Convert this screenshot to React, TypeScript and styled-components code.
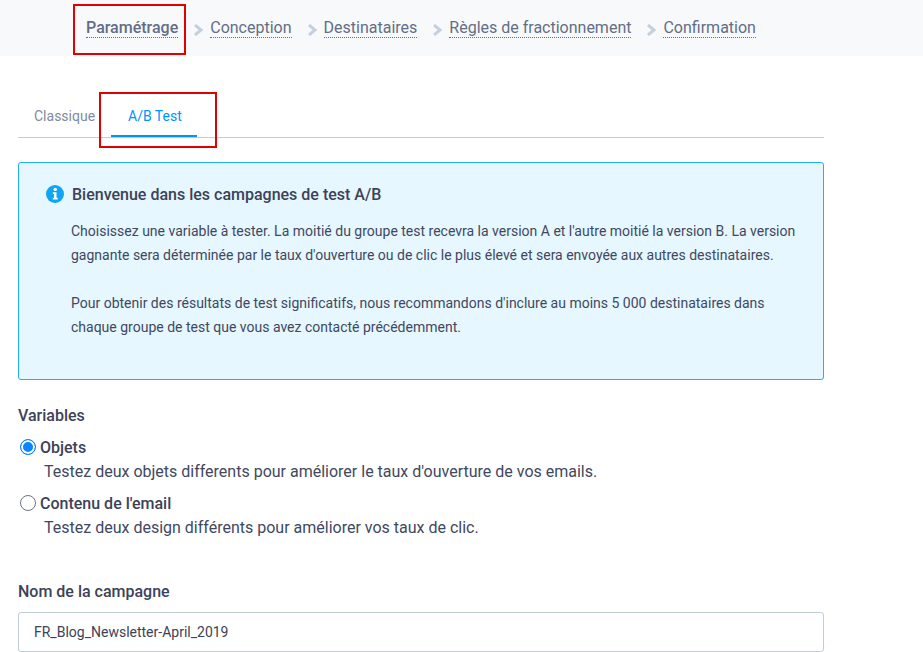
import React from "react";
import styled, { createGlobalStyle } from "styled-components";

const Global = createGlobalStyle`
  html, body { margin: 0; padding: 0; background: #fff; }
  body { font-family: Roboto, "Liberation Sans", sans-serif; color: #3c4257; overflow: hidden; }
  * { box-sizing: border-box; }
`;

const Page = styled.div`
  position: relative;
  width: 923px;
  height: 652px;
  overflow: hidden;
`;

const StepBar = styled.nav`
  height: 56px;
  background: #f8f9fb;
  padding: 19px 0 0 86px;
  display: flex;
  align-items: flex-start;
`;

const Step = styled.span<{ $active?: boolean }>`
  font-size: 16px;
  line-height: 18px;
  height: 19px;
  font-weight: ${(p) => (p.$active ? 500 : 400)};
  color: #626e85;
  border-bottom: 1px dotted #626e85;
`;

const Chevron = styled.svg`
  width: 11px;
  height: 12px;
  margin: 5px 6px 0 15px;
  flex: none;
`;

const Content = styled.main`
  width: 806px;
  margin-left: 18px;
`;

const Tabs = styled.div`
  display: flex;
  height: 82px;
  padding-top: 44px;
  border-bottom: 1px solid #c3ccd6;
`;

const Tab = styled.div<{ $active?: boolean; $width: number; $pad: number }>`
  width: ${(p) => p.$width}px;
  padding-left: ${(p) => p.$pad}px;
  height: 37px;
  font-size: 14px;
  line-height: 32px;
  color: ${(p) => (p.$active ? "#0092ff" : "#7f8ba0")};
  border-bottom: 2px solid ${(p) => (p.$active ? "#0092ff" : "transparent")};
`;

const Alert = styled.section`
  margin-top: 24px;
  height: 218px;
  background: #e6f7ff;
  border: 1px solid #22b1ee;
  border-radius: 3px;
  padding: 22px 20px 0 27px;
`;

const AlertTitle = styled.h2`
  display: flex;
  align-items: center;
  gap: 8px;
  margin: 0;
  height: 20px;
  font-size: 16px;
  line-height: 20px;
  font-weight: 500;
  color: #3c4257;
`;

const InfoIcon = styled.svg`
  width: 18px;
  height: 18px;
  flex: none;
  margin-top: -2px;
`;

const AlertBody = styled.div`
  margin: 14px 0 0 25px;
  font-size: 14px;
  line-height: 24px;
  color: #3f4860;
`;

const AlertParagraph = styled.p`
  margin: 0 0 24px;
`;

const SectionLabel = styled.div`
  margin-top: 26px;
  font-size: 16px;
  line-height: 20px;
  font-weight: 500;
  color: #3c4257;
`;

const OptionList = styled.div`
  margin-top: 9px;
  display: flex;
  flex-direction: column;
  gap: 7px;
`;

const Option = styled.label`
  display: block;
`;

const OptionHead = styled.span`
  display: flex;
  align-items: center;
  height: 24px;
  font-size: 16px;
  font-weight: 500;
  color: #3c4257;
`;

const Radio = styled.span<{ $checked?: boolean }>`
  width: 16px;
  height: 16px;
  margin: 0 4px 0 2px;
  border-radius: 50%;
  flex: none;
  background: ${(p) => (p.$checked ? "#0a84ff" : "#fff")};
  border: 1px solid ${(p) => (p.$checked ? "#0a84ff" : "#6f7580")};
  box-shadow: ${(p) => (p.$checked ? "inset 0 0 0 2px #fff" : "none")};
`;

const OptionHint = styled.span`
  display: block;
  margin: 1px 0 0 26px;
  font-size: 16px;
  line-height: 24px;
  color: #3f4860;
`;

const FieldLabel = styled.div`
  margin-top: 42px;
  font-size: 16px;
  line-height: 20px;
  font-weight: 500;
  color: #3c4257;
`;

const TextInput = styled.input`
  display: block;
  width: 100%;
  height: 40px;
  margin-top: 10px;
  padding: 0 15px;
  border: 1px solid #bfccdb;
  border-radius: 3px;
  font: 400 14px Roboto, "Liberation Sans", sans-serif;
  color: #3c4257;
  background: #fff;
  outline: none;
`;

const Highlight = styled.div<{ $x: number; $y: number; $w: number; $h: number }>`
  position: absolute;
  left: ${(p) => p.$x}px;
  top: ${(p) => p.$y}px;
  width: ${(p) => p.$w}px;
  height: ${(p) => p.$h}px;
  border: 2px solid #e20000;
  pointer-events: none;
`;

const steps = ["Conception", "Destinataires", "Règles de fractionnement", "Confirmation"];

const StepChevron = () => (
  <Chevron viewBox="0 0 11 12">
    <path d="M2 1 L8 6 L2 11" fill="none" stroke="#c5d0de" strokeWidth="3" />
  </Chevron>
);

export default function App() {
  return (
    <Page>
      <Global />
      <StepBar>
        <Step $active>Paramétrage</Step>
        {steps.map((s) => (
          <React.Fragment key={s}>
            <StepChevron />
            <Step>{s}</Step>
          </React.Fragment>
        ))}
      </StepBar>
      <Content>
        <Tabs>
          <Tab $width={93} $pad={16}>Classique</Tab>
          <Tab $active $width={86} $pad={17}>A/B Test</Tab>
        </Tabs>
        <Alert>
          <AlertTitle>
            <InfoIcon viewBox="0 0 18 18">
              <circle cx="9" cy="9" r="9" fill="#0ea5f5" />
              <circle cx="9.2" cy="4.4" r="1.7" fill="#fff" />
              <path d="M6.8 7.2h3.7v5.6h1.2v1.7H6.8v-1.7H8V8.9H6.8z" fill="#fff" />
            </InfoIcon>
            Bienvenue dans les campagnes de test A/B
          </AlertTitle>
          <AlertBody>
            <AlertParagraph>
              Choisissez une variable à tester. La moitié du groupe test recevra la version A et l'autre moitié la version B. La version gagnante sera déterminée par le taux d'ouverture ou de clic le plus élevé et sera envoyée aux autres destinataires.
            </AlertParagraph>
            <AlertParagraph>
              Pour obtenir des résultats de test significatifs, nous recommandons d'inclure au moins 5 000 destinataires dans chaque groupe de test que vous avez contacté précédemment.
            </AlertParagraph>
          </AlertBody>
        </Alert>
        <SectionLabel>Variables</SectionLabel>
        <OptionList>
          <Option>
            <OptionHead><Radio $checked />Objets</OptionHead>
            <OptionHint>Testez deux objets differents pour améliorer le taux d'ouverture de vos emails.</OptionHint>
          </Option>
          <Option>
            <OptionHead><Radio />Contenu de l'email</OptionHead>
            <OptionHint>Testez deux design différents pour améliorer vos taux de clic.</OptionHint>
          </Option>
        </OptionList>
        <FieldLabel>Nom de la campagne</FieldLabel>
        <TextInput readOnly value="FR_Blog_Newsletter-April_2019" />
      </Content>
      <Highlight $x={73} $y={4} $w={113} $h={51} />
      <Highlight $x={99} $y={92} $w={118} $h={56} />
    </Page>
  );
}
